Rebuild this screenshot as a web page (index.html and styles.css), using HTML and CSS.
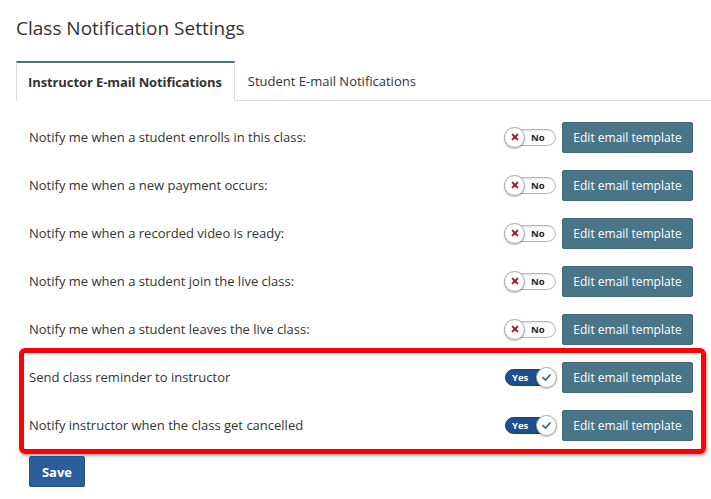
FILE: index.html
```html
<!DOCTYPE html>
<html>
<head>
<meta charset="utf-8">
<link rel="stylesheet" href="styles.css">
</head>
<body>
<div class="page">
  <h1 class="title">Class Notification Settings</h1>
  <div class="tabs">
    <div class="tab active">Instructor E-mail Notifications</div>
    <div class="tab">Student E-mail Notifications</div>
  </div>
  <div class="panel">
    <div class="row">
      <span class="label">Notify me when a student enrolls in this class:</span>
      <div class="controls">
        <span class="toggle off"><span class="knob"><svg viewBox="0 0 10 10" width="8" height="8"><path d="M2 2 L8 8 M8 2 L2 8" stroke="#a3112b" stroke-width="2.4" stroke-linecap="round"/></svg></span><span class="tval">No</span></span>
        <button class="edit">Edit email template</button>
      </div>
    </div>
    <div class="row">
      <span class="label">Notify me when a new payment occurs:</span>
      <div class="controls">
        <span class="toggle off"><span class="knob"><svg viewBox="0 0 10 10" width="8" height="8"><path d="M2 2 L8 8 M8 2 L2 8" stroke="#a3112b" stroke-width="2.4" stroke-linecap="round"/></svg></span><span class="tval">No</span></span>
        <button class="edit">Edit email template</button>
      </div>
    </div>
    <div class="row">
      <span class="label">Notify me when a recorded video is ready:</span>
      <div class="controls">
        <span class="toggle off"><span class="knob"><svg viewBox="0 0 10 10" width="8" height="8"><path d="M2 2 L8 8 M8 2 L2 8" stroke="#a3112b" stroke-width="2.4" stroke-linecap="round"/></svg></span><span class="tval">No</span></span>
        <button class="edit">Edit email template</button>
      </div>
    </div>
    <div class="row">
      <span class="label">Notify me when a student join the live class:</span>
      <div class="controls">
        <span class="toggle off"><span class="knob"><svg viewBox="0 0 10 10" width="8" height="8"><path d="M2 2 L8 8 M8 2 L2 8" stroke="#a3112b" stroke-width="2.4" stroke-linecap="round"/></svg></span><span class="tval">No</span></span>
        <button class="edit">Edit email template</button>
      </div>
    </div>
    <div class="row">
      <span class="label">Notify me when a student leaves the live class:</span>
      <div class="controls">
        <span class="toggle off"><span class="knob"><svg viewBox="0 0 10 10" width="8" height="8"><path d="M2 2 L8 8 M8 2 L2 8" stroke="#a3112b" stroke-width="2.4" stroke-linecap="round"/></svg></span><span class="tval">No</span></span>
        <button class="edit">Edit email template</button>
      </div>
    </div>
    <div class="highlight">
      <div class="row">
        <span class="label">Send class reminder to instructor</span>
        <div class="controls">
          <span class="toggle on"><span class="tval">Yes</span><span class="knob"><svg viewBox="0 0 12 10" width="11" height="9"><path d="M2 5.2 L4.8 7.8 L10 2.2" fill="none" stroke="#4a7587" stroke-width="2" stroke-linecap="round" stroke-linejoin="round"/></svg></span></span>
          <button class="edit">Edit email template</button>
        </div>
      </div>
      <div class="row">
        <span class="label">Notify instructor when the class get cancelled</span>
        <div class="controls">
          <span class="toggle on"><span class="tval">Yes</span><span class="knob"><svg viewBox="0 0 12 10" width="11" height="9"><path d="M2 5.2 L4.8 7.8 L10 2.2" fill="none" stroke="#4a7587" stroke-width="2" stroke-linecap="round" stroke-linejoin="round"/></svg></span></span>
          <button class="edit">Edit email template</button>
        </div>
      </div>
    </div>
    <button class="save">Save</button>
  </div>
</div>
</body>
</html>
```

FILE: styles.css
```css
* { box-sizing: border-box; }
html, body { margin: 0; padding: 0; background: #fff; }
body {
  font-family: "Open Sans", "Liberation Sans", sans-serif;
  color: #333;
  font-size: 13px;
}
.page { padding: 0 0 0 16px; width: 711px; height: 499px; overflow: hidden; }
.title {
  margin: 0;
  padding-top: 15px;
  height: 61px;
  font-size: 19px;
  font-weight: 400;
  line-height: 26px;
  color: #333;
}
.tabs {
  display: flex;
  border-bottom: 1px solid #dcdcdc;
  height: 40px;
}
.tab {
  padding: 0 13px;
  height: 40px;
  line-height: 40px;
  font-size: 13px;
  color: #333;
  white-space: nowrap;
}
.tab.active {
  font-weight: 700;
  font-size: 13px;
  letter-spacing: -0.1px;
  padding: 0 12px 0 11px;
  border-top: 2px solid #4a7587;
  border-left: 1px solid #dcdcdc;
  border-right: 1px solid #dcdcdc;
  background: #fff;
  height: 40px;
  line-height: 38px;
  margin-bottom: -1px;
}
.panel {
  padding: 12px 18px 0 13px;
}
.row {
  display: flex;
  align-items: center;
  justify-content: space-between;
  height: 48px;
}
.label { font-size: 13px; }
.controls { display: flex; align-items: center; gap: 6px; }
.edit {
  font-family: "Open Sans", "Liberation Sans", sans-serif;
  font-size: 12px;
  color: #fff;
  background: #4a7587;
  border: 1px solid #426a7b;
  border-radius: 2px;
  width: 131px;
  height: 31px;
  padding: 0;
}
.toggle {
  position: relative;
  display: flex;
  align-items: center;
  width: 51px;
  height: 17px;
  border-radius: 9px;
  font-size: 9.5px;
  font-weight: 700;
  font-family: "Open Sans", "Liberation Sans", sans-serif;
}
.toggle.off {
  background: #fff;
  border: 1px solid #b9b9b9;
  box-shadow: inset 0 1px 2px rgba(0,0,0,0.12);
}
.toggle.on {
  background: #1e4f8e;
  border: 1px solid #183f73;
  color: #fff;
  justify-content: space-between;
}
.knob {
  width: 21px;
  height: 21px;
  border-radius: 50%;
  background: #fff;
  border: 1px solid #aaa;
  box-shadow: 0 1px 2px rgba(0,0,0,0.25);
  display: flex;
  align-items: center;
  justify-content: center;
  flex: none;
}
.toggle.off .knob { margin-left: -2px; }
.toggle.on .knob { margin-right: -2px; }
.toggle.off .tval { margin-left: 6px; color: #222; }
.toggle.on .tval { margin-left: 6px; }
.highlight {
  margin: -5px -13px 0 -10px;
  padding: 0 8px 0 5px;
  border: 5px solid #f00;
  border-radius: 6px;
  box-shadow: 1px 2px 3px rgba(0,0,0,0.35);
}
.save {
  margin-top: 2px;
  font-family: "Open Sans", "Liberation Sans", sans-serif;
  font-size: 13px;
  font-weight: 700;
  color: #fff;
  background: #2b5e9c;
  border: 1px solid #245189;
  border-radius: 2px;
  width: 56px;
  height: 31px;
  padding: 0;
}
```
